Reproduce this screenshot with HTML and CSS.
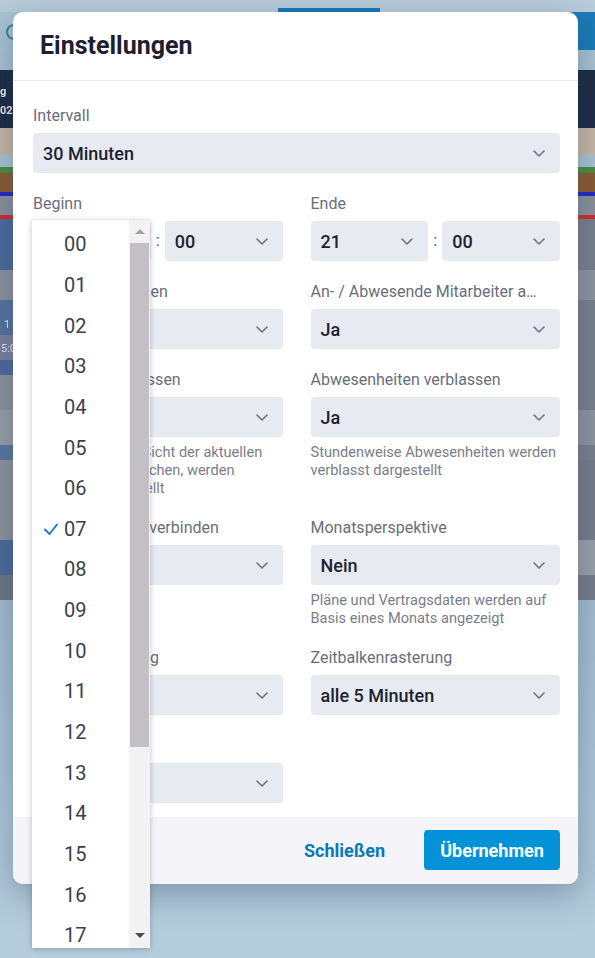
FILE: index.html
```html
<!DOCTYPE html>
<html lang="de">
<head>
<meta charset="utf-8">
<title>Einstellungen</title>
<link rel="stylesheet" href="styles.css">
</head>
<body>
<div class="app">
  <div class="app-top"><span class="tab-indicator"></span></div>
  <div class="app-head">
    <span class="app-logo"></span>
    <span class="head-btn"></span>
  </div>
  <div class="strip s-navy"><div class="navy-txt">g<br>025</div></div>
  <div class="strip s-beige"></div>
  <div class="strip s-light"></div>
  <div class="strip s-green"></div>
  <div class="strip s-brown"></div>
  <div class="strip s-blue"></div>
  <div class="strip s-gray"></div>
  <div class="strip s-red"></div>
  <div class="strip r1"></div>
  <div class="strip r2"></div>
  <div class="strip r3"><span class="cell-txt txt-one">1</span></div>
  <div class="strip r4"><span class="cell-txt">5:0</span></div>
  <div class="strip r5"></div>
  <div class="strip r6"></div>
  <div class="strip r7"></div>
  <div class="strip r8"></div>
  <div class="strip r9"></div>
  <div class="strip r10"></div>
  <div class="strip r11"></div>
  <div class="app-rest"></div>
</div>

<div class="overlay">
  <div class="dialog">
    <div class="dialog-head">
      <h1 class="dialog-title">Einstellungen</h1>
    </div>
    <div class="dialog-body">
      <div class="field">
        <div class="label">Intervall</div>
        <div class="select"><span>30 Minuten</span><svg class="chev" viewBox="0 0 12 7"><path d="M1 1l5 5 5-5"/></svg></div>
      </div>

      <div class="grid">
        <div class="field">
          <div class="label">Beginn</div>
          <div class="time">
            <div class="select"><span>07</span><svg class="chev" viewBox="0 0 12 7"><path d="M1 1l5 5 5-5"/></svg></div>
            <span class="colon">:</span>
            <div class="select"><span>00</span><svg class="chev" viewBox="0 0 12 7"><path d="M1 1l5 5 5-5"/></svg></div>
          </div>
        </div>
        <div class="field">
          <div class="label">Ende</div>
          <div class="time">
            <div class="select"><span>21</span><svg class="chev" viewBox="0 0 12 7"><path d="M1 1l5 5 5-5"/></svg></div>
            <span class="colon">:</span>
            <div class="select"><span>00</span><svg class="chev" viewBox="0 0 12 7"><path d="M1 1l5 5 5-5"/></svg></div>
          </div>
        </div>

        <div class="field">
          <div class="label">Feiertage anzeigen</div>
          <div class="select"><span>Ja</span><svg class="chev" viewBox="0 0 12 7"><path d="M1 1l5 5 5-5"/></svg></div>
        </div>
        <div class="field">
          <div class="label label-trunc">An- / Abwesende Mitarbeiter ausblenden</div>
          <div class="select"><span>Ja</span><svg class="chev" viewBox="0 0 12 7"><path d="M1 1l5 5 5-5"/></svg></div>
        </div>

        <div class="field">
          <div class="label">Feiertage verblassen</div>
          <div class="select"><span>Ja</span><svg class="chev" viewBox="0 0 12 7"><path d="M1 1l5 5 5-5"/></svg></div>
          <p class="hint">Termine, die aus Sicht der aktuellen Zeit in vorigen Wochen, werden verblasst dargestellt</p>
        </div>
        <div class="field">
          <div class="label">Abwesenheiten verblassen</div>
          <div class="select"><span>Ja</span><svg class="chev" viewBox="0 0 12 7"><path d="M1 1l5 5 5-5"/></svg></div>
          <p class="hint">Stundenweise Abwesenheiten werden verblasst dargestellt</p>
        </div>

        <div class="field">
          <div class="label">Geteilte Dienste verbinden</div>
          <div class="select"><span>Nein</span><svg class="chev" viewBox="0 0 12 7"><path d="M1 1l5 5 5-5"/></svg></div>
        </div>
        <div class="field">
          <div class="label">Monatsperspektive</div>
          <div class="select"><span>Nein</span><svg class="chev" viewBox="0 0 12 7"><path d="M1 1l5 5 5-5"/></svg></div>
          <p class="hint">Pläne und Vertragsdaten werden auf Basis eines Monats angezeigt</p>
        </div>

        <div class="field">
          <div class="label">Schichtsortierung</div>
          <div class="select"><span>Name</span><svg class="chev" viewBox="0 0 12 7"><path d="M1 1l5 5 5-5"/></svg></div>
        </div>
        <div class="field">
          <div class="label">Zeitbalkenrasterung</div>
          <div class="select"><span>alle 5 Minuten</span><svg class="chev" viewBox="0 0 12 7"><path d="M1 1l5 5 5-5"/></svg></div>
        </div>

        <div class="field">
          <div class="label">Gruppierung</div>
          <div class="select"><span>Keine</span><svg class="chev" viewBox="0 0 12 7"><path d="M1 1l5 5 5-5"/></svg></div>
        </div>
      </div>
    </div>
    <div class="dialog-foot">
      <button class="btn-text" type="button">Schließen</button>
      <button class="btn-primary" type="button">Übernehmen</button>
    </div>
  </div>
</div>

<div class="popup">
  <ul class="options">
    <li class="opt"><span class="tick"></span>00</li>
    <li class="opt"><span class="tick"></span>01</li>
    <li class="opt"><span class="tick"></span>02</li>
    <li class="opt"><span class="tick"></span>03</li>
    <li class="opt"><span class="tick"></span>04</li>
    <li class="opt"><span class="tick"></span>05</li>
    <li class="opt"><span class="tick"></span>06</li>
    <li class="opt selected"><span class="tick"><svg viewBox="0 0 14 12"><path d="M1 6.5l4.5 4.5L13 1.5"/></svg></span>07</li>
    <li class="opt"><span class="tick"></span>08</li>
    <li class="opt"><span class="tick"></span>09</li>
    <li class="opt"><span class="tick"></span>10</li>
    <li class="opt"><span class="tick"></span>11</li>
    <li class="opt"><span class="tick"></span>12</li>
    <li class="opt"><span class="tick"></span>13</li>
    <li class="opt"><span class="tick"></span>14</li>
    <li class="opt"><span class="tick"></span>15</li>
    <li class="opt"><span class="tick"></span>16</li>
    <li class="opt"><span class="tick"></span>17</li>
  </ul>
  <div class="scrollbar">
    <div class="sb-btn"><span class="arrow-up"></span></div>
    <div class="sb-thumb"></div>
    <div class="sb-space"></div>
    <div class="sb-btn sb-btn-down"><span class="arrow-down"></span></div>
  </div>
</div>
</body>
</html>
```
FILE: styles.css
```css
* { box-sizing: border-box; }

html, body {
  margin: 0;
  padding: 0;
  width: 595px;
  height: 958px;
  overflow: hidden;
}

body {
  font-family: Roboto, "Liberation Sans", Arial, sans-serif;
  background: #aac3d4;
  position: relative;
}

/* ---------- background app (blurred behind backdrop) ---------- */
.app {
  display: flex;
  flex-direction: column;
  height: 958px;
  filter: blur(0.6px);
}
.app-top {
  height: 12px;
  background: #b8ccd9;
  display: flex;
  align-items: flex-end;
}
.tab-indicator {
  display: block;
  margin-left: 278px;
  width: 102px;
  height: 4px;
  background: #1479b6;
}
.app-head {
  height: 58px;
  background: #a9c3d3;
  display: flex;
  align-items: flex-start;
  justify-content: space-between;
}
.app-logo {
  display: block;
  width: 16px;
  height: 16px;
  margin: 12px 0 0 6px;
  border: 2.5px solid #3c7fb0;
  border-radius: 50%;
}
.head-btn {
  display: block;
  width: 38px;
  height: 38px;
  background: #1a7bb8;
  border-top-left-radius: 9px;
}
.strip { flex: none; }
.s-navy { height: 58px; background: #1c2a42; }
.navy-txt {
  padding: 12px 0 0 0;
  font: 700 11px/19px Roboto, sans-serif;
  color: #e8ecf3;
}
.s-beige { height: 27px; background: #c8b8a6; }
.s-light { height: 12px; background: #aac3d3; }
.s-green { height: 6px; background: #4b8c3e; }
.s-brown { height: 19px; background: #8b5a32; }
.s-blue { height: 4px; background: #2129c8; }
.s-gray { height: 19px; background: #8b919a; }
.s-red { height: 4px; background: #d62b2b; }
.r1 { height: 51px; background: linear-gradient(to right, #4b6a9c 50%, #7a808c 50%); }
.r2 { height: 30px; background: linear-gradient(to right, #8d929c 50%, #8f959e 50%); }
.r3 { height: 35px; background: linear-gradient(to right, #56739e 50%, #7a808c 50%); }
.r4 { height: 25px; background: linear-gradient(to right, #7c7f9e 50%, #7a808c 50%); }
.r5 { height: 15px; background: linear-gradient(to right, #4d6a9c 50%, #7a808c 50%); }
.r6 { height: 35px; background: linear-gradient(to right, #8d9299 50%, #7a808c 50%); }
.r7 { height: 35px; background: linear-gradient(to right, #9a9ea5 50%, #8f959e 50%); }
.r8 { height: 15px; background: linear-gradient(to right, #5a76a0 50%, #7a808c 50%); }
.r9 { height: 80px; background: linear-gradient(to right, #8f949b 50%, #777d89 50%); }
.r10 { height: 35px; background: linear-gradient(to right, #4a6a98 50%, #9aa0a8 50%); }
.r11 { height: 25px; background: linear-gradient(to right, #6f7580 50%, #777d89 50%); }
.cell-txt {
  display: block;
  padding: 7px 0 0 1px;
  font: 400 11px/14px Roboto, sans-serif;
  color: #e6e9ef;
}
.txt-one {
  padding: 18px 0 0 4px;
}
.app-rest {
  flex: 1;
  background: linear-gradient(to bottom, #a4bdcf, #b6cddd);
}

/* ---------- dialog ---------- */
.overlay {
  position: absolute;
  inset: 0;
  padding: 12px 0 0 13px;
}
.dialog {
  width: 565px;
  background: #ffffff;
  border-radius: 10px;
  overflow: hidden;
  box-shadow: 0 10px 34px rgba(40, 62, 92, 0.38);
}
.dialog-head {
  height: 69px;
  border-bottom: 1px solid #e6e8ee;
  display: flex;
  align-items: center;
  padding: 0 0 2px 27px;
}
.dialog-title {
  margin: 0;
  font-size: 25px;
  font-weight: 700;
  color: #1c2030;
}
.dialog-body {
  padding: 25px 18px 14px 20px;
  display: flex;
  flex-direction: column;
  gap: 21px;
}
.grid {
  display: grid;
  grid-template-columns: 1fr 1fr;
  column-gap: 28px;
  row-gap: 21px;
  align-items: start;
}
.field {
  display: flex;
  flex-direction: column;
  min-width: 0;
}
.label {
  font-size: 16px;
  line-height: 20px;
  color: #6a6e7b;
  margin-bottom: 7px;
  white-space: nowrap;
}
.label-trunc {
  overflow: hidden;
  text-overflow: ellipsis;
  padding-right: 18px;
}
.select {
  height: 40px;
  background: #e8eaf1;
  border-radius: 4px;
  display: flex;
  align-items: center;
  justify-content: space-between;
  padding: 0 15px 0 10px;
  font-size: 18px;
  font-weight: 500;
  color: #1d2233;
}
.chev {
  width: 12px;
  height: 7px;
  flex: none;
  fill: none;
  stroke: #6f7280;
  stroke-width: 1.6;
  stroke-linecap: round;
  stroke-linejoin: round;
}
.time {
  display: grid;
  grid-template-columns: 1fr 14px 1fr;
  align-items: center;
}
.colon {
  text-align: center;
  font-size: 17px;
  color: #555a66;
  padding-bottom: 2px;
}
.hint {
  margin: 6px 0 0;
  font-size: 14.6px;
  line-height: 18px;
  color: #7a7d89;
}
.dialog-foot {
  height: 67px;
  background: #f5f5f9;
  display: flex;
  align-items: center;
  justify-content: flex-end;
  padding: 0 18px 1px 0;
  gap: 23px;
}
.btn-text, .btn-primary {
  font-family: Roboto, "Liberation Sans", Arial, sans-serif;
  font-size: 18px;
  font-weight: 700;
  height: 40px;
  border: 0;
  border-radius: 4px;
  cursor: pointer;
}
.btn-text {
  background: transparent;
  color: #0b79b5;
  padding: 0 16px;
}
.btn-primary {
  width: 136px;
  background: #0391d8;
  color: #ffffff;
}

/* ---------- open native select popup ---------- */
.popup {
  position: absolute;
  left: 32px;
  top: 220px;
  width: 118px;
  height: 728px;
  background: #ffffff;
  box-shadow: 0 1px 6px rgba(30, 40, 60, 0.28);
  display: flex;
  overflow: hidden;
}
.options {
  list-style: none;
  margin: 0;
  padding: 4px 0 0;
  flex: 1;
}
.opt {
  height: 40.65px;
  display: flex;
  align-items: center;
  font-size: 20px;
  color: #3d4049;
}
.tick {
  width: 32px;
  flex: none;
  display: flex;
  justify-content: flex-end;
  padding-right: 6px;
}
.tick svg {
  width: 14px;
  height: 12px;
  fill: none;
  stroke: #1f7bc4;
  stroke-width: 2;
  stroke-linecap: round;
  stroke-linejoin: round;
}
.scrollbar {
  width: 21px;
  flex: none;
  background: #f3f1f3;
  display: flex;
  flex-direction: column;
}
.sb-btn {
  height: 23px;
  display: flex;
  align-items: center;
  justify-content: center;
}
.sb-btn-down {
  height: 26px;
}
.arrow-up {
  width: 0;
  height: 0;
  border-left: 5px solid transparent;
  border-right: 5px solid transparent;
  border-bottom: 5px solid #a5a5a8;
}
.arrow-down {
  width: 0;
  height: 0;
  border-left: 5px solid transparent;
  border-right: 5px solid transparent;
  border-top: 5px solid #4c4c50;
}
.sb-thumb {
  height: 504px;
  margin: 0 1px;
  background: #c2c0c4;
}
.sb-space { flex: 1; }
```
